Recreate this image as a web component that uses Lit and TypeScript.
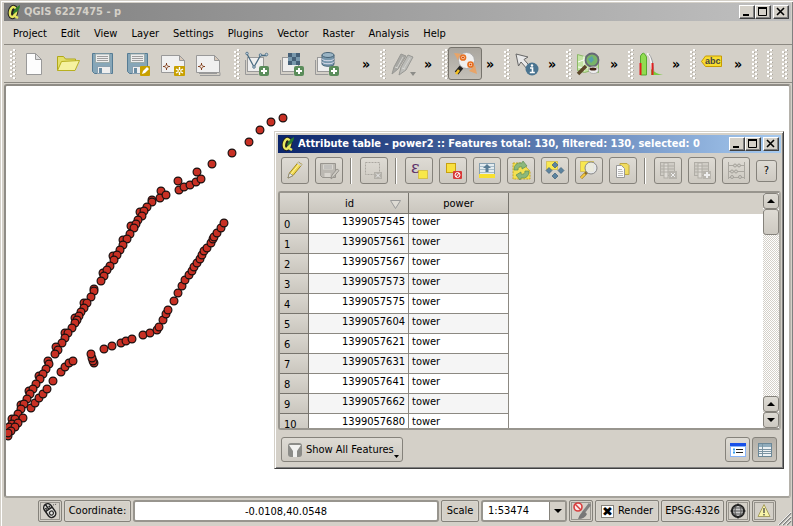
import { LitElement, html, svg, css } from "lit";
import { customElement, property } from "lit/decorators.js";

const shared = css`
  :host {
    font-family: "DejaVu Sans Condensed", "Noto Sans", sans-serif;
    font-size: 11px;
    line-height: 14px;
    color: #000;
  }
  * {
    box-sizing: border-box;
  }
  svg {
    display: block;
    flex: none;
  }
  button {
    font: inherit;
    color: inherit;
    margin: 0;
    padding: 0;
    border: 0;
    background: none;
    display: flex;
    align-items: center;
    justify-content: center;
  }
`;

// Toolbar artwork, each on a 28 x 28 grid.
const floppy = svg`
  <path d="M3.5 3.5h20v20h-18l-2-2z" fill="#86a6b8" stroke="#567c94"/>
  <rect x="6.500" y="4" width="14" height="8.500" fill="#eee" stroke="#9aa"/>
  <path d="M8 6.500h11M8 8.500h11M8 10.500h11" stroke="#888" stroke-width=".8"/>
  <rect x="8.500" y="16.500" width="13" height="7" fill="#eee" stroke="#8aa0b0"/>
  <rect x="10" y="18" width="3" height="5" fill="#6a8ca2"/>`;

const plusBadge = svg`
  <rect x="16" y="16" width="10" height="10" rx="2" fill="#5a8c5a"/>
  <path d="M21 18v6M18 21h6" stroke="#fff" stroke-width="2"/>`;

const layerBack = svg`
  <path d="M2.500 10v14.500h13" fill="none" stroke="#999"/>
  <rect x="4.500" y="7.500" width="16" height="14" fill="#eee" stroke="#999"/>`;

const composer = svg`
  <path d="M2.500 5.500h18l5 5v12h-23z" fill="#f0f0f0" stroke="#999"/>
  <path d="M20.500 5.500v5h5z" fill="#d8c8b8" stroke="#999"/>
  <path d="M7.500 13v7M4 16.500h7" stroke="#804020"/>
  <circle cx="7.500" cy="16.500" r="1.600" fill="#f8f0e8" stroke="#804020" stroke-width=".8"/>`;

const ICONS: Record<string, unknown> = {
  newFile: svg`<path d="M7.500 3.500h9l6 6v15h-15z" fill="#fdfdfd" stroke="#999"/>
    <path d="M16.500 3.500v6h6z" fill="#ddd" stroke="#999"/>`,
  open: svg`<path d="M3.500 20.500v-14h6l2 2.500h10v4" fill="#e4df6a" stroke="#b0a818"/>
    <path d="M3.500 20.500l4-9 18-1-4.500 10z" fill="#f6f2a0" stroke="#b8b020"/>`,
  save: floppy,
  saveAs: svg`${floppy}<rect x="16" y="16" width="10" height="10" rx="1" fill="#c8a000"/>
    <path d="M18 24l1-3 4-4 2 2-4 4z" fill="#fff"/>`,
  newComposer: svg`${composer}<rect x="15" y="16" width="11" height="10" rx="1" fill="#c8a000"/>
    <path d="M20.500 17v8M17 19l7 4M24 19l-7 4" stroke="#fff" stroke-width="1.400"/>
    <circle cx="20.500" cy="21" r="1" fill="#c8a000"/>`,
  composerManager: svg`<path d="M6 25.500h20v-3M5 23.500h18" fill="none" stroke="#999"/>${composer}`,
  vector: svg`${layerBack}<path d="M4 4l7 13 6.500-11.500h6" fill="none" stroke="#4a6c82" stroke-width="1.300"/>
    <g fill="#bcd" stroke="#4a6c82" stroke-width=".8"><circle cx="4" cy="3.500" r="1.300"/><circle cx="11" cy="17" r="1.300"/>
    <circle cx="17.500" cy="5" r="1.300"/><circle cx="23.500" cy="4.500" r="1.300"/></g>${plusBadge}`,
  raster: svg`${layerBack}<rect x="10" y="3" width="12" height="12" fill="#456078"/>
    <path d="M14 3h4v4h-4zM10 7h4v4h-4zM18 7h4v4h-4zM14 11h4v4h-4z" fill="#7898ac"/>${plusBadge}`,
  database: svg`${layerBack}<path d="M9 5v9c0 3 12 3 12 0v-9" fill="#7898ac" stroke="#486478"/>
    <ellipse cx="15" cy="5" rx="6" ry="2.500" fill="#9ab4c4" stroke="#486478"/>
    <path d="M9 8.500c0 3 12 3 12 0M9 11.500c0 3 12 3 12 0" fill="none" stroke="#dde"/>${plusBadge}`,
  pencils: svg`<path d="M3 24l2-7 7-13 5 2-8 13z" fill="#a8a8a4" stroke="#989894"/>
    <path d="M10 25l2-8 7-12 5 2-7 13z" fill="#bcbcb8" stroke="#989894"/>
    <path d="M13 18l3 1M6 17l3 1" stroke="#d8d8d4"/>
    <path d="M14 7l-6 11M21 8l-6 10" stroke="#d0d0cc"/>
    <path d="M21 22h6l-3 4z" fill="#8c8c88"/>`,
  tracer: svg`<path d="M10.500 17l-5 6" stroke="#222" stroke-width="4.500"/><path d="M8 20l-3 4" stroke="#f4c020" stroke-width="2.500"/>
    <path d="M3 3l9 1-4 8zM26 24l-8-3 6-6z" fill="#e8a468"/>
    <circle cx="15.500" cy="10.500" r="8" fill="#f0f0f0" stroke="#aaa"/>
    <g fill="#ffe8d0" stroke="#e87020" stroke-width="1.700"><circle cx="12" cy="7.500" r="2.500"/><circle cx="19.500" cy="14.500" r="2.500"/></g>
    <circle cx="12" cy="7.500" r="1" fill="#d04000"/><circle cx="19.500" cy="14.500" r="1" fill="#d04000"/>`,
  identify: svg`<path d="M3 4l12 3-4 2.500 7 8-3 2.500-7-8-2.500 4z" fill="#e8e8e8" stroke="#666"/>
    <circle cx="19" cy="19" r="6.500" fill="#4a7490"/><circle cx="19" cy="15.500" r="1.200" fill="#fff"/>
    <path d="M17 18h2.500v4.500M16.800 22.500h5" fill="none" stroke="#fff" stroke-width="1.600"/>`,
  map: svg`<path d="M2.500 4.500l7 2 7-2 7 2v16l-7-2-7 2-7-2z" fill="#c4e4a4" stroke="#8cb868"/>
    <path d="M3 12l8-3 4 5 8-2M9 6v15M3 17l10 1" fill="none" stroke="#fff"/>
    <path d="M11 16l-8 8" stroke="#5c4828" stroke-width="3.500"/>
    <circle cx="17" cy="10" r="6.500" fill="#78b468" stroke="#667" stroke-width="1.800"/>
    <path d="M13 9l4-3 2 4-3 3z" fill="#58a0a8"/>
    <ellipse cx="18.500" cy="20" rx="5" ry="3.500" fill="#eee" stroke="#999" stroke-width=".6"/><ellipse cx="18" cy="19" rx="3.500" ry="1.500" fill="#402010"/>`,
  histogram: svg`<path d="M3.500 25V6q3-6 6 1v18z" fill="#90dc50" stroke="#58a830"/>
    <path d="M10 4q3 0 4 6l2 15" fill="none" stroke="#fafafa" stroke-width="2"/><path d="M12 4q4 4 5 20" fill="none" stroke="#999"/>
    <path d="M14 19q5 5 12 6H14z" fill="#78cc40"/><path d="M3.500 13v12M15.500 13v12" stroke="#e02020" stroke-width="2"/>`,
  label: svg`<path d="M2.500 11.500l4-5.500h16v10.500h-16z" fill="#f8dc30" stroke="#c89c00"/>
    <text x="6" y="14" font-size="9" font-weight="bold" font-family="Liberation Sans, sans-serif" fill="#444">abc</text>`,
  edit: svg`<path d="M7 21l1.500-5 9-11 3.500 2.500-9 11z" fill="#f0d850" stroke="#a08820"/>
    <path d="M7 21l1.500-5 3.500 2.500z" fill="#eee" stroke="#777" stroke-width=".7"/><path d="M10 17l8.500-10.500" stroke="#fff6a0"/>
    <path d="M16.500 5.500l4 3" stroke="#ccc" stroke-width="2"/>`,
  saveOff: svg`<path d="M5.500 6.500h15v14H7.500l-2-2z" fill="#bbb8b2" stroke="#98958f"/>
    <path d="M8 7.500h10v5H8zM9.500 16h6v4h-6z" fill="#d8d5cf"/><path d="M9 9h8M9 11h8" stroke="#aaa"/>
    <path d="M16 22l1-4 5-6 2 1.500-5 6z" fill="#ccc9c2" stroke="#98958f"/>`,
  deleteOff: svg`<rect x="5.500" y="5.500" width="14" height="12" fill="none" stroke="#aaa7a0" stroke-dasharray="2 1"/>
    <rect x="14" y="15" width="8" height="7" fill="#b4b1aa"/><path d="M16 16.500l4 4M20 16.500l-4 4" stroke="#eee"/>`,
  expression: svg`<text x="6" y="16" font-size="17" font-family="DejaVu Serif, serif" fill="#5c3068">ε</text>
    <rect x="13.500" y="13.500" width="9" height="8" fill="#f8e848" stroke="#c8a810" stroke-dasharray="1 1"/>`,
  unselect: svg`<rect x="7.500" y="6.500" width="9" height="9" fill="#f8e040" stroke="#c8a010"/>
    <rect x="14" y="14" width="9" height="8" rx="1" fill="#d83838"/><circle cx="18.500" cy="18" r="2.500" fill="none" stroke="#fff"/><path d="M17 20l3-4" stroke="#fff"/>`,
  moveTop: svg`<rect x="6.500" y="6.500" width="15" height="14" fill="#e4ecf0" stroke="#88a0b0"/>
    <path d="M7 9.500h14M7 12.500h14M7 15.500h14" stroke="#a8bcc8"/><rect x="6" y="17" width="16" height="4" fill="#f8e030"/>
    <path d="M10 11l4-4 4 4h-2.500v4h-3v-4z" fill="#587c94"/>`,
  invert: svg`<path d="M6 6h9l8 8v8H6z" fill="#f4e050" stroke="#c8a820" stroke-dasharray="2 1"/>
    <path d="M7 13q0-8 8-7l1-2 4 5-5 3v-2q-4-1-4 3zM22 14q0 8-8 7l-1 2-4-5 5-3v2q4 1 4-3z" fill="#8cb87c" stroke="#5c8c54" stroke-width=".7"/>`,
  pan: svg`<rect x="5.500" y="4.500" width="11" height="8" fill="#f8e850" stroke="#c8a820" stroke-dasharray="1 1"/>
    <g fill="#5c84a0" stroke="#406078" stroke-width=".7"><path d="M14 5l3 3-3 3-3-3zM14 16l3 3-3 3-3-3zM8 10.500l3 3-3 3-3-3zM20 10.500l3 3-3 3-3-3z"/></g>`,
  zoomTo: svg`<rect x="5.500" y="4.500" width="13" height="10" fill="#f8e850" stroke="#c8a820" stroke-dasharray="1 1"/>
    <path d="M12 15l-6 6" stroke="#907020" stroke-width="3"/><path d="M10 17l-4 4" stroke="#f4c840" stroke-width="2"/>
    <circle cx="16" cy="11" r="6" fill="#e8eaec" fill-opacity=".9" stroke="#888"/>`,
  copy: svg`<path d="M11 6.500h7l2 2v9h-9z" fill="#f0dc60" stroke="#c0a840"/>
    <path d="M7.500 8.500h5l3 3v9h-8z" fill="#fafafa" stroke="#999"/><path d="M9 12.500h4M9 14.500h5M9 16.500h5M9 18.500h5" stroke="#aaa" stroke-width=".8"/>`,
  colDelete: svg`<rect x="6.500" y="5.500" width="14" height="13" fill="#cfccc5" stroke="#b0ada6"/><rect x="10" y="6" width="4" height="15" fill="#dedbd5" stroke="#b0ada6"/>
    <path d="M7 9h13M7 12h13M7 15h13" stroke="#b0ada6"/><rect x="15" y="14" width="8" height="8" fill="#b8b5ae"/><path d="M17 16l4 4M21 16l-4 4" stroke="#eee"/>`,
  colNew: svg`<rect x="6.500" y="5.500" width="14" height="13" fill="#cfccc5" stroke="#b0ada6"/><rect x="10" y="6" width="4" height="15" fill="#dedbd5" stroke="#b0ada6"/>
    <path d="M7 9h13M7 12h13M7 15h13" stroke="#b0ada6"/><rect x="15" y="14" width="8" height="8" fill="#b8b5ae"/><path d="M19 15v6M16 18h6" stroke="#eee" stroke-width="2"/>`,
  abacus: svg`<path d="M6.500 5v17M22.500 5v17M6 8.500h17M6 14.500h17M6 20.500h17" stroke="#aaa7a0" fill="none"/>
    <g fill="#cfccc5" stroke="#a4a19a"><circle cx="13" cy="8.500" r="1.500"/><circle cx="17" cy="8.500" r="1.500"/><circle cx="10" cy="14.500" r="1.500"/>
    <circle cx="14" cy="14.500" r="1.500"/><circle cx="10" cy="20" r="1.500"/><circle cx="18" cy="20" r="1.500"/></g>`,
  funnel: svg`<rect x="6" y="7" width="14" height="14" rx="3" fill="#8c8c88"/><path d="M7 9h12l-4 6v6h-4v-6z" fill="#f2f2f0"/>`,
  form: svg`<rect x="6" y="7" width="16" height="14" fill="#88b4f8"/><rect x="7" y="11" width="14" height="9" fill="#fff"/><rect x="6" y="7" width="16" height="3" fill="#1850e8"/>
    <path d="M9 13.500h2M9 16.500h2" stroke="#38a0f0" stroke-width="2"/><path d="M12 13.500h7M12 16.500h7" stroke="#222"/>`,
  grid: svg`<rect x="7.500" y="7.500" width="13" height="13" fill="#eef2f4" stroke="#6c8898"/><rect x="8" y="8" width="12" height="3" fill="#90acbc"/>
    <path d="M8 13.500h12M8 15.500h12M8 17.500h12M11.500 8v12" stroke="#7c94a2"/>`,
  mouse: svg`<g transform="rotate(-35 14 14)"><rect x="10" y="6" width="8" height="15" rx="4" fill="#e8e8e4" stroke="#222" stroke-width="1.500"/>
    <path d="M10 12h8M14 6v6M12 9v2M16 9v2" stroke="#222" stroke-width="1.500"/><circle cx="14" cy="16.500" r="2" fill="none" stroke="#333" stroke-width="1.200"/></g>
    <path d="M17 8l4-1" stroke="#555" stroke-dasharray="1 1"/>`,
  brush: svg`<path d="M23 7l-7 9" stroke="#808080" stroke-width="3"/><path d="M17 14q-4 2-6 8 7 0 9-5z" fill="#777"/>
    <circle cx="11" cy="10" r="4" fill="#fbe8e8" stroke="#d84040" stroke-width="1.600"/><path d="M8 7l6 6" stroke="#d84040" stroke-width="1.500"/>`,
  globe: svg`<circle cx="14" cy="14" r="6" fill="#ccc" stroke="#222" stroke-width="2"/><ellipse cx="14" cy="14" rx="3" ry="6" fill="none" stroke="#555"/>
    <path d="M8 14h12M9 11h10M9 17h10" stroke="#555"/><path d="M14 6l2 3h-4zM14 22l2-3h-4zM6 14l3-2v4zM22 14l-3-2v4z" fill="#222"/>`,
  warning: svg`<path d="M14 7.500l6 12H8z" fill="#f8f4a8" stroke="#a8a060"/><path d="M14 11v5M14 17v1.500" stroke="#444" stroke-width="1.300"/>`,
};

const icon = (name: string) =>
  html`<svg width="28" height="28" viewBox="0 0 28 28" aria-hidden="true">${ICONS[name]}</svg>`;

@customElement("title-bar")
class TitleBar extends LitElement {
  @property() label = "";

  static styles = [
    shared,
    css`
      :host {
        display: flex;
        align-items: center;
        height: 18px;
        padding: 0 2px;
        background: linear-gradient(to right, var(--from), var(--to));
        color: var(--ink);
      }
      .text {
        flex: 1;
        margin: 0 0 0 2px;
        font-family: "DejaVu Sans Condensed", sans-serif;
        font-size: 11px;
        line-height: 18px;
        font-weight: bold;
        white-space: nowrap;
        overflow: hidden;
      }
      .box {
        width: 16px;
        height: 14px;
        background: #d4d0c8;
        border: 1px solid;
        border-color: #fff #404040 #404040 #fff;
        box-shadow: inset -1px -1px #808080;
      }
      .close {
        margin-left: 2px;
      }
    `,
  ];

  render() {
    return html`
      <svg width="16" height="16" viewBox="0 0 16 16" aria-hidden="true">
        <ellipse cx="7" cy="8" rx="3" ry="5" transform="rotate(12 7 8)" fill="#222" stroke="#222" stroke-width="4.500" />
        <ellipse cx="7" cy="8" rx="3" ry="5" transform="rotate(12 7 8)" fill="#222" stroke="#e8e860" stroke-width="2.500" />
        <path d="M7 11l5 3" stroke="#e8e860" stroke-width="2.500" />
        <path d="M14 1q0 6-7 9Q7 5 14 1z" fill="#2c7c2c" />
      </svg>
      <h1 class="text">${this.label}</h1>
      <button class="box" aria-label="Minimize">
        <svg width="12" height="10" viewBox="0 0 12 10"><path d="M2 8h6" stroke="#000" stroke-width="2" /></svg>
      </button>
      <button class="box" aria-label="Maximize">
        <svg width="12" height="10" viewBox="0 0 12 10">
          <path d="M1.500 1v7.500h8V1" fill="none" stroke="#000" /><path d="M1 1h9" stroke="#000" stroke-width="2" />
        </svg>
      </button>
      <button class="box close" aria-label="Close">
        <svg width="12" height="10" viewBox="0 0 12 10"><path d="M2 1l7 7M9 1l-7 7" stroke="#000" stroke-width="1.600" /></svg>
      </button>
    `;
  }
}

const MENUS = ["Project", "Edit", "View", "Layer", "Settings", "Plugins", "Vector", "Raster", "Analysis", "Help"];

interface ToolGroup {
  items: [string, string][];
  more?: boolean;
  size?: string;
  pressed?: boolean;
}

const GROUPS: ToolGroup[] = [
  {
    size: "wide",
    items: [
      ["newFile", "New"],
      ["open", "Open"],
      ["save", "Save"],
      ["saveAs", "Save As"],
      ["newComposer", "New Print Composer"],
      ["composerManager", "Composer Manager"],
    ],
  },
  {
    size: "layers",
    more: true,
    items: [
      ["vector", "Add Vector Layer"],
      ["raster", "Add Raster Layer"],
      ["database", "Add Database Layer"],
    ],
  },
  { more: true, items: [["pencils", "Current Edits"]] },
  { more: true, pressed: true, items: [["tracer", "Zoom"]] },
  { more: true, items: [["identify", "Identify Features"]] },
  { more: true, items: [["map", "Map Search"]] },
  { more: true, items: [["histogram", "Histogram Stretch"]] },
  { more: true, items: [["label", "Labeling"]] },
];

// Tower positions in map view units; the view's top left is at 6, 86.
const TOWERS: [number, number][] = [
  [283, 118], [271, 122], [260, 130], [249, 142], [232, 153], [212, 164], [197, 172], [178, 181],
  [179, 190], [184, 187], [190, 185], [196, 182], [201, 179], [161, 191], [160, 198], [166, 195],
  [152, 200], [152, 202], [147, 207], [140, 212], [144, 211], [142, 216], [138, 220], [131, 226], [136, 224], [134, 228],
  [130, 234], [123, 240], [127, 239], [123, 245], [120, 250], [113, 256], [117, 255], [114, 260], [110, 266],
  [103, 273], [107, 270], [104, 276], [101, 281], [94, 289], [94, 291], [91, 297], [84, 303], [87, 303], [84, 308],
  [81, 312], [75, 318], [79, 316], [77, 320], [75, 323], [72, 328], [65, 333], [68, 333], [65, 338], [62, 343],
  [56, 347], [58, 350], [55, 354], [48, 361], [49, 364], [46, 369], [39, 376], [43, 374], [40, 379], [36, 384],
  [29, 391], [33, 389], [30, 394], [27, 399], [21, 405], [24, 404], [21, 409], [18, 414],
  [12, 419], [15, 419], [12, 424], [9, 427], [23, 418], [18, 423], [15, 427], [11, 431], [8, 436], [8, 433],
  [31, 408], [35, 403], [39, 398], [43, 394], [47, 389], [53, 381], [61, 372], [65, 367], [69, 363], [73, 361],
  [94, 363], [93, 361], [92, 358], [91, 354], [104, 349], [112, 346], [121, 343], [126, 341], [132, 339], [143, 335], [150, 333],
  [157, 330], [159, 327], [163, 320], [166, 314], [168, 310], [174, 301], [178, 293], [182, 286], [185, 280],
  [189, 275], [192, 271], [194, 267], [197, 263], [200, 259], [202, 255], [204, 251], [207, 248], [211, 243],
  [213, 239], [214, 237], [217, 233], [221, 228], [224, 223],
];

@customElement("app-root")
class AppRoot extends LitElement {
  static styles = [
    shared,
    css`
      :host {
        display: flex;
        flex-direction: column;
        min-height: 100vh;
        padding: 3px 1px 1px 4px;
        background: #d4d0c8;
        box-shadow: inset 1px 1px #d4d0c8, inset 2px 2px #fff, inset -1px -1px #808080;
        box-sizing: border-box;
        overflow: hidden;
      }
      .main-title {
        --from: #808080;
        --to: #c0c0c0;
        --ink: #d4d0c8;
        margin-right: 1px;
      }
      .menus {
        display: flex;
        height: 24px;
        align-items: center;
        gap: 14px;
        padding: 3px 9px 0;
        border-bottom: 1px solid #8c8982;
      }
      .menus a {
        color: inherit;
        text-decoration: none;
      }
      .tools {
        display: flex;
        gap: 6px;
        height: 38px;
        align-items: center;
        padding-left: 6px;
        border-bottom: 1px solid #8c8982;
      }
      .group {
        display: flex;
        align-items: center;
      }
      .group.wide {
        gap: 1px;
        width: 218px;
      }
      .group.layers {
        gap: 1px;
        width: 140px;
      }
      .group.wide .handle,
      .group.layers .handle {
        margin-right: -1px;
      }
      .tail {
        display: flex;
        gap: 9px;
      }
      .tool {
        width: 34px;
        height: 33px;
        border-radius: 3px;
      }
      .tool.pressed {
        border: 1px solid #77746d;
        background: linear-gradient(#aaa69f, #c4c0b8);
      }
      .more {
        width: 16px;
        height: 33px;
        margin-left: auto;
        font-family: "DejaVu Sans Condensed", sans-serif;
        font-size: 14px;
        font-weight: bold;
      }
      .canvas {
        position: relative;
        flex: 1;
        margin: 1px 1px 0 0;
        min-height: 400px;
        background: #fff;
        border: 2px solid #8f8c86;
        border-radius: 3px;
        border-color: #8f8c86 #b5b2ab #a5a29b #8f8c86;
        overflow: hidden;
      }
      .dialog {
        position: absolute;
        left: 268px;
        top: 45px;
        right: 5px;
      }
      .status {
        display: flex;
        gap: 2px;
        height: 28px;
        padding: 2px 0 0 34px;
      }
      .cell {
        display: flex;
        align-items: center;
        justify-content: center;
        height: 22px;
        padding: 0 3px;
        border: 1px solid #85827b;
        border-radius: 2px;
        white-space: nowrap;
        box-shadow: inset 0 0 0 1px #d9d6cf;
      }
      .icon-cell {
        width: 24px;
        padding: 0;
        overflow: hidden;
        box-shadow: inset 0 0 0 1px #d4d0c8, inset 0 0 0 2px #98958e;
      }
      .coord-label {
        width: 67px;
      }
      .scale-label {
        width: 38px;
      }
      .render {
        width: 64px;
        gap: 4px;
        padding: 0;
      }
      .crs {
        width: 63px;
      }
      .coord,
      .scale {
        height: 22px;
        font: inherit;
        color: #000;
        background: #fff;
        border: 2px solid #98958e;
        border-radius: 3px;
        outline: 0;
        margin: 0;
      }
      .coord {
        flex: 1;
        min-width: 0;
        text-align: center;
      }
      .combo {
        display: grid;
        width: 86px;
        height: 22px;
      }
      .combo > * {
        grid-area: 1 / 1;
      }
      .scale {
        appearance: none;
        padding: 0 5px;
        width: 100%;
      }
      .arrow {
        justify-self: end;
        align-self: center;
        margin-right: 2px;
        pointer-events: none;
      }
      .tick {
        appearance: none;
        width: 13px;
        height: 13px;
        margin: 0;
        background: #fff;
        border: 1px solid #85827b;
        display: flex;
        align-items: center;
        justify-content: center;
      }
      .tick:checked::before {
        content: "✖";
        font: 13px/11px "DejaVu Sans", sans-serif;
      }
      .grip {
        align-self: flex-end;
        margin-left: auto;
      }
    `,
  ];

  private handle() {
    const dots = [];
    for (let y = 0; y < 30; y += 2) {
      const x = y % 4 ? 0 : 3;
      dots.push(svg`<rect x=${x + 1} y=${y + 1} width="2" height="1" fill="#aaa7a0"/><rect x=${x} y=${y} width="2" height="2" fill="#fff"/>`);
    }
    return html`<svg class="handle" width="6" height="30" viewBox="0 0 6 30" aria-hidden="true">${dots}</svg>`;
  }

  render() {
    return html`
      <title-bar class="main-title" label="QGIS 6227475 - p"></title-bar>
      <nav class="menus">${MENUS.map((m) => html`<a href="#">${m}</a>`)}</nav>
      <div class="tools" role="toolbar">
        ${GROUPS.map(
          (g) => html`<div class="group ${g.size ?? ""}">
            ${this.handle()}
            ${g.items.map(
              ([name, label]) =>
                html`<button class="tool ${g.pressed ? "pressed" : ""}" aria-label=${label}>${icon(name)}</button>`
            )}
            ${g.more ? html`<button class="more" aria-label="More tools">»</button>` : ""}
          </div>`
        )}
        <div class="tail">${this.handle()}${this.handle()}${this.handle()}</div>
      </div>
      <main class="canvas">
        <svg width="783" height="410" viewBox="6 86 783 410" role="img" aria-label="Map of towers">
          ${TOWERS.map(([x, y]) => svg`<circle cx=${x} cy=${y} r="3.900" fill="#c83024" stroke="#181010" stroke-width="1.200"/>`)}
        </svg>
        <attribute-table class="dialog"></attribute-table>
      </main>
      <footer class="status">
        <button class="cell icon-cell" aria-label="Toggle extents">${icon("mouse")}</button>
        <label class="cell coord-label" for="coord">Coordinate:</label>
        <input class="coord" id="coord" type="text" .value=${"-0.0108,40.0548"} />
        <label class="cell scale-label" for="scale">Scale</label>
        <div class="combo">
          <select class="scale" id="scale"><option>1:53474</option></select>
          <svg class="arrow" width="16" height="18" viewBox="0 0 16 18">
            <rect width="16" height="18" fill="#d4d0c8" /><path d="M.5 0v18" stroke="#85827b" /><path d="M5 7h8l-4 4z" />
          </svg>
        </div>
        <button class="cell icon-cell" aria-label="Stop rendering">${icon("brush")}</button>
        <label class="cell render"><input class="tick" type="checkbox" checked />Render</label>
        <button class="cell crs">EPSG:4326</button>
        <button class="cell icon-cell" aria-label="CRS status">${icon("globe")}</button>
        <button class="cell icon-cell" aria-label="Messages">${icon("warning")}</button>
        <svg class="grip" width="14" height="14" viewBox="0 0 14 14" aria-hidden="true">
          <path d="M1 13L13 1M5 13l8-8M9 13l4-4" stroke="#808080" stroke-width="1.500" />
          <path d="M0 13L13 0M4 13l9-9M8 13l5-5" stroke="#fff" stroke-width=".8" />
        </svg>
      </footer>
    `;
  }
}

const DIALOG_TOOLS: [string, string][] = [
  ["edit", "Toggle editing"],
  ["saveOff", "Save edits"],
  ["|", ""],
  ["deleteOff", "Delete selected"],
  ["|", ""],
  ["expression", "Select by expression"],
  ["unselect", "Unselect all"],
  ["moveTop", "Move selection to top"],
  ["invert", "Invert selection"],
  ["pan", "Pan map to selection"],
  ["zoomTo", "Zoom map to selection"],
  ["copy", "Copy rows"],
  ["|", ""],
  ["colDelete", "Delete column"],
  ["colNew", "New column"],
  ["abacus", "Field calculator"],
];

const IDS = [
  1399057545, 1399057561, 1399057567, 1399057573, 1399057575, 1399057604, 1399057621, 1399057631, 1399057641,
  1399057662, 1399057680,
];

@customElement("attribute-table")
class AttributeTable extends LitElement {
  static styles = [
    shared,
    css`
      :host {
        display: block;
        box-sizing: border-box;
        padding: 2px 1px 0 2px;
        background: #d4d0c8;
        border: 1px solid;
        border-color: #d4d0c8 #404040 #404040 #d4d0c8;
        box-shadow: inset 1px 1px #fff, inset -1px -1px #808080;
      }
      .title {
        --from: #0a246a;
        --to: #a6caf0;
        --ink: #fff;
        margin: 1px 1px 0;
      }
      .bar {
        display: flex;
        align-items: center;
        gap: 6px;
        padding: 4px 4px 7px;
      }
      .btn {
        border: 1px solid #85827b;
        border-radius: 3px;
        background: linear-gradient(#dedbd4, #cdc9c1);
      }
      .act {
        width: 28px;
        height: 27px;
      }
      .help {
        width: 21px;
        height: 22px;
      }
      .sep {
        width: 5px;
        height: 26px;
        border-left: 1px solid transparent;
        background: linear-gradient(to right, #85827b 1px, #fff 1px, #fff 2px, transparent 2px);
        background-origin: content-box;
        background-repeat: no-repeat;
      }
      .frame {
        display: flex;
        height: 239px;
        margin: 0 1px;
        border: 2px solid #98958e;
        border-color: #98958e #aeaba4 #98958e #98958e;
        border-radius: 3px;
        background: #fff;
        overflow: hidden;
      }
      .view {
        flex: 1;
        overflow: hidden;
        background: linear-gradient(#d4d0c8 21px, #fff 21px);
      }
      table {
        border-collapse: separate;
        border-spacing: 0;
        table-layout: fixed;
        width: 229px;
      }
      th,
      td {
        height: 20px;
        padding: 0;
        font-weight: normal;
        border-right: 1px solid #8c8982;
        border-bottom: 1px solid #8c8982;
      }
      th {
        background: linear-gradient(#dad7d0, #cac6be);
        border-color: #77746d;
      }
      thead th {
        height: 21px;
        padding-top: 2px;
      }
      .num {
        width: 29px;
        text-align: left;
        padding: 3px 0 0 4px;
      }
      .wide {
        width: 100px;
      }
      .sorted {
        display: grid;
        grid-template-columns: 1fr auto 1fr;
        align-items: center;
      }
      .sorted span {
        grid-column: 2;
        margin-right: 18px;
      }
      .sorted svg {
        grid-column: 3;
        justify-self: end;
        margin-right: 7px;
      }
      td {
        padding: 0 3px 3px;
      }
      .id {
        text-align: right;
      }
      tr:nth-child(even) td {
        background: #f5f5f5;
      }
      .scroll {
        display: flex;
        flex-direction: column;
        width: 16px;
        background: repeating-conic-gradient(#fff 0 25%, #d4d0c8 0 50%) 0 0 / 2px 2px;
      }
      .step {
        width: 16px;
        height: 16px;
      }
      .thumb {
        height: 26px;
        margin-bottom: auto;
      }
      .foot {
        display: flex;
        align-items: center;
        gap: 2px;
        padding: 7px 5px 6px 4px;
      }
      .filter {
        width: 122px;
        height: 25px;
        margin-right: auto;
        justify-content: flex-start;
        white-space: nowrap;
      }
      .filter .icon {
        width: 24px;
        overflow: hidden;
      }
      .drop {
        align-self: flex-end;
        margin: 0 3px 3px auto;
      }
      .mode {
        width: 25px;
        height: 25px;
      }
      .mode.on {
        background: linear-gradient(#b4b0a8, #c8c4bc);
      }
    `,
  ];

  private arrow(d: string) {
    return html`<svg width="10" height="6" viewBox="0 0 10 6"><path d=${d} /></svg>`;
  }

  render() {
    const up = "M1 5h8l-4-4z";
    const down = "M1 1h8l-4 4z";
    return html`
      <title-bar
        class="title"
        label="Attribute table - power2 :: Features total: 130, filtered: 130, selected: 0"
      ></title-bar>
      <div class="bar" role="toolbar">
        ${DIALOG_TOOLS.map(([name, label]) =>
          name === "|"
            ? html`<span class="sep"></span>`
            : html`<button class="btn act" aria-label=${label}>${icon(name)}</button>`
        )}
        <button class="btn help">?</button>
      </div>
      <div class="frame">
        <div class="view">
          <table>
            <thead>
              <tr>
                <th class="num"></th>
                <th class="wide">
                  <div class="sorted">
                    <span>id</span>
                    <svg width="11" height="9" viewBox="0 0 11 9"><path d="M.5 .5h10l-5 8z" fill="#dedbd4" stroke="#999" /></svg>
                  </div>
                </th>
                <th class="wide">power</th>
              </tr>
            </thead>
            <tbody>
              ${IDS.map(
                (id, i) => html`<tr>
                  <th class="num" scope="row">${i}</th>
                  <td class="id">${id}</td>
                  <td>tower</td>
                </tr>`
              )}
            </tbody>
          </table>
        </div>
        <div class="scroll">
          <button class="btn step" aria-label="Scroll up">${this.arrow(up)}</button>
          <div class="btn thumb"></div>
          <button class="btn step" aria-label="Page up">${this.arrow(up)}</button>
          <button class="btn step" aria-label="Scroll down">${this.arrow(down)}</button>
        </div>
      </div>
      <div class="foot">
        <button class="btn filter">
          <span class="icon">${icon("funnel")}</span>Show All Features
          <svg class="drop" width="5" height="3" viewBox="0 0 5 3"><path d="M0 0h5l-2.500 3z" /></svg>
        </button>
        <button class="btn mode" aria-label="Form view">${icon("form")}</button>
        <button class="btn mode on" aria-label="Table view">${icon("grid")}</button>
      </div>
    `;
  }
}
